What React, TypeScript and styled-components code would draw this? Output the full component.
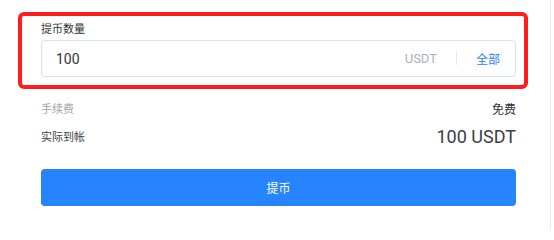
import React from "react";
import styled, { createGlobalStyle } from "styled-components";

const GlobalStyle = createGlobalStyle`
  html, body {
    margin: 0;
    padding: 0;
    background: #ffffff;
  }
  body {
    font-family: Roboto, "Noto Sans CJK SC", "Noto Sans", sans-serif;
    color: #333333;
  }
`;

function App() {
  return (
    <>
      <GlobalStyle />
      <Page>
        <Panel>
          <Highlight>
            <FieldLabel>提币数量</FieldLabel>
            <AmountBox>
              <AmountValue>100</AmountValue>
              <Unit>USDT</Unit>
              <Divider />
              <AllButton>全部</AllButton>
            </AmountBox>
          </Highlight>
          <Summary>
            <Row>
              <RowLabel $muted>手续费</RowLabel>
              <FeeValue>免费</FeeValue>
            </Row>
            <Row>
              <RowLabel>实际到帐</RowLabel>
              <TotalValue>100 USDT</TotalValue>
            </Row>
            <SubmitButton>提币</SubmitButton>
          </Summary>
        </Panel>
      </Page>
    </>
  );
}

const Page = styled.div`
  width: 554px;
  height: 230px;
  display: flex;
  background: #ffffff;
`;

const Panel = styled.div`
  width: 551px;
  height: 230px;
  box-sizing: border-box;
  border-right: 1px solid #e6ebf3;
  padding: 12px 0 0 18px;
  display: flex;
  flex-direction: column;
`;

const Highlight = styled.div`
  width: 510px;
  box-sizing: border-box;
  border: 4px solid #ff1c1c;
  border-radius: 6px;
  padding: 6px 8px 8px 19px;
  display: flex;
  flex-direction: column;
`;

const FieldLabel = styled.div`
  font-size: 11px;
  line-height: 16px;
  color: #333333;
  margin-bottom: 2px;
`;

const AmountBox = styled.div`
  height: 37px;
  box-sizing: border-box;
  border: 1px solid #dcdfe6;
  border-radius: 4px;
  padding: 0 15px 0 14px;
  display: flex;
  align-items: center;
`;

const AmountValue = styled.span`
  flex: 1;
  font-size: 14px;
  color: #333333;
`;

const Unit = styled.span`
  font-size: 13px;
  color: #a9b0bb;
`;

const Divider = styled.span`
  width: 1px;
  height: 13px;
  background: #e3e8ef;
  margin: 0 19px 0 19px;
`;

const AllButton = styled.span`
  font-size: 12px;
  color: #2f7ef5;
  cursor: pointer;
`;

const Summary = styled.div`
  width: 475px;
  margin-left: 23px;
  padding-top: 5px;
  display: flex;
  flex-direction: column;
`;

const Row = styled.div`
  height: 28px;
  display: flex;
  align-items: center;
  justify-content: space-between;
`;

const RowLabel = styled.span<{ $muted?: boolean }>`
  font-size: 11px;
  color: ${({ $muted }) => ($muted ? "#a0a4ab" : "#3c3f45")};
`;

const FeeValue = styled.span`
  font-size: 12px;
  color: #333333;
`;

const TotalValue = styled.span`
  font-size: 18px;
  color: #3a3e46;
`;

const SubmitButton = styled.button`
  margin-top: 19px;
  height: 37px;
  width: 100%;
  border: none;
  border-radius: 4px;
  background: #2684ff;
  color: #ffffff;
  font-family: Roboto, "Noto Sans CJK SC", sans-serif;
  font-size: 12px;
  cursor: pointer;
`;

export default App;
